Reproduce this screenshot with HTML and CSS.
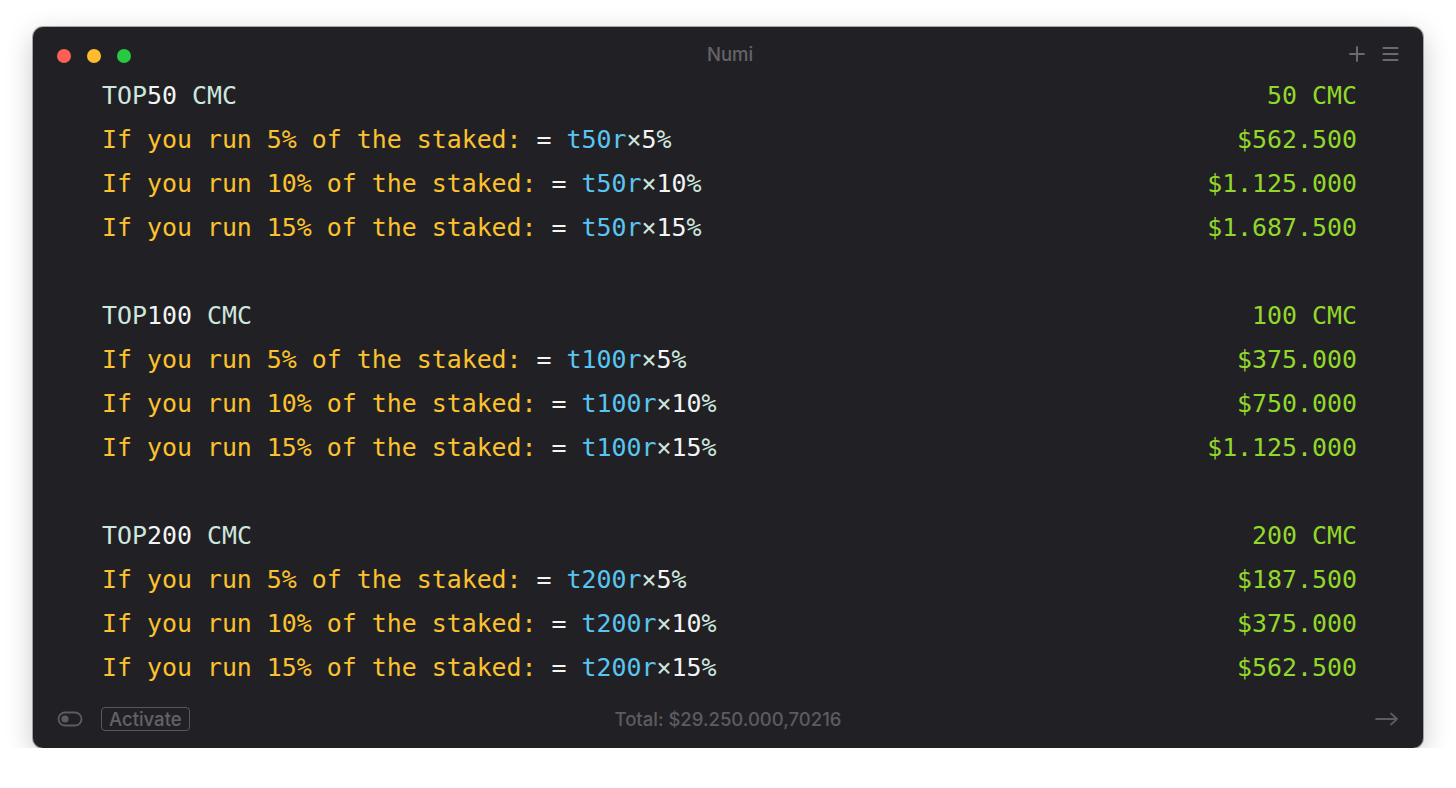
FILE: index.html
```html
<!DOCTYPE html>
<html>
<head>
<meta charset="utf-8">
<title>Numi</title>
<link rel="stylesheet" href="styles.css">
</head>
<body>
<div class="window">
  <div class="titlebar">
    <div class="lights">
      <span class="light red"></span>
      <span class="light yellow"></span>
      <span class="light green"></span>
    </div>
    <div class="title">Numi</div>
    <div class="tools">
      <svg width="16" height="16" viewBox="0 0 16 16"><path d="M8 1v14M1 8h14" stroke="#6a6a6e" stroke-width="2" stroke-linecap="round"/></svg>
      <svg width="17" height="16" viewBox="0 0 17 16"><path d="M1.5 2h14M1.5 8h14M1.5 14h14" stroke="#6a6a6e" stroke-width="2.2" stroke-linecap="round"/></svg>
    </div>
  </div>
  <div class="content">
    <div class="line"><span><span class="t">TOP</span><span class="n">50</span><span class="t"> CMC</span></span><span class="r">50 CMC</span></div>
    <div class="line"><span><span class="y">If you run 5% of the staked:</span> <span class="n">=</span> <span class="v">t50r</span><span class="t">×</span><span class="n">5</span><span class="t">%</span></span><span class="r">$562.500</span></div>
    <div class="line"><span><span class="y">If you run 10% of the staked:</span> <span class="n">=</span> <span class="v">t50r</span><span class="t">×</span><span class="n">10</span><span class="t">%</span></span><span class="r">$1.125.000</span></div>
    <div class="line"><span><span class="y">If you run 15% of the staked:</span> <span class="n">=</span> <span class="v">t50r</span><span class="t">×</span><span class="n">15</span><span class="t">%</span></span><span class="r">$1.687.500</span></div>
    <div class="line"></div>
    <div class="line"><span><span class="t">TOP</span><span class="n">100</span><span class="t"> CMC</span></span><span class="r">100 CMC</span></div>
    <div class="line"><span><span class="y">If you run 5% of the staked:</span> <span class="n">=</span> <span class="v">t100r</span><span class="t">×</span><span class="n">5</span><span class="t">%</span></span><span class="r">$375.000</span></div>
    <div class="line"><span><span class="y">If you run 10% of the staked:</span> <span class="n">=</span> <span class="v">t100r</span><span class="t">×</span><span class="n">10</span><span class="t">%</span></span><span class="r">$750.000</span></div>
    <div class="line"><span><span class="y">If you run 15% of the staked:</span> <span class="n">=</span> <span class="v">t100r</span><span class="t">×</span><span class="n">15</span><span class="t">%</span></span><span class="r">$1.125.000</span></div>
    <div class="line"></div>
    <div class="line"><span><span class="t">TOP</span><span class="n">200</span><span class="t"> CMC</span></span><span class="r">200 CMC</span></div>
    <div class="line"><span><span class="y">If you run 5% of the staked:</span> <span class="n">=</span> <span class="v">t200r</span><span class="t">×</span><span class="n">5</span><span class="t">%</span></span><span class="r">$187.500</span></div>
    <div class="line"><span><span class="y">If you run 10% of the staked:</span> <span class="n">=</span> <span class="v">t200r</span><span class="t">×</span><span class="n">10</span><span class="t">%</span></span><span class="r">$375.000</span></div>
    <div class="line"><span><span class="y">If you run 15% of the staked:</span> <span class="n">=</span> <span class="v">t200r</span><span class="t">×</span><span class="n">15</span><span class="t">%</span></span><span class="r">$562.500</span></div>
  </div>
  <div class="footer">
    <div class="left">
      <svg width="26" height="16" viewBox="0 0 26 16"><rect x="1.5" y="1.5" width="23" height="13" rx="6.5" fill="none" stroke="#5c5c60" stroke-width="1.8"/><circle cx="8" cy="8" r="3.6" fill="#5c5c60"/></svg>
      <span class="activate">Activate</span>
    </div>
    <div class="total">Total: $29.250.000,70216</div>
    <div class="right">
      <svg width="24" height="14" viewBox="0 0 24 14"><path d="M1 7h21M16 1.5l6 5.5-6 5.5" fill="none" stroke="#5c5c60" stroke-width="1.8" stroke-linecap="round" stroke-linejoin="round"/></svg>
    </div>
  </div>
</div>
</body>
</html>
```

FILE: styles.css
```css
html, body {
  margin: 0;
  padding: 0;
  background: #ffffff;
}
body {
  padding: 27px 0 0 33px;
}
.window {
  width: 1390px;
  height: 721px;
  background: #212125;
  border-radius: 10px;
  box-shadow: 0 8px 28px rgba(0,0,0,0.22), 0 0 0 1px rgba(0,0,0,0.3);
  display: flex;
  flex-direction: column;
  overflow: hidden;
}
.titlebar {
  height: 46px;
  box-sizing: border-box;
  padding: 8px 24px 0 24px;
  display: flex;
  align-items: center;
}
.lights {
  display: flex;
  gap: 16px;
  margin-top: 4px;
}
.light {
  width: 14px;
  height: 14px;
  border-radius: 50%;
  display: block;
}
.red { background: #fe5f57; }
.yellow { background: #febc2e; }
.green { background: #28c840; }
.title {
  flex: 1;
  text-align: center;
  font-family: "Inter", "Liberation Sans", sans-serif;
  font-size: 18.5px;
  font-weight: 500;
  color: #646468;
  margin-left: -20px;
}
.tools {
  display: flex;
  align-items: center;
  gap: 17px;
}
.content {
  flex: 1;
  padding: 1px 66px 0 69px;
  font-family: "DejaVu Sans Mono", monospace;
  font-size: 24.9px;
}
.line {
  height: 44px;
  line-height: 44px;
  display: flex;
  justify-content: space-between;
  white-space: pre;
}
.t { color: #cde6de; }
.n { color: #f4f4f4; }
.y { color: #fcc12e; }
.v { color: #5ac5f2; }
.r { color: #92d82b; }
.footer {
  height: 59px;
  display: flex;
  align-items: center;
  justify-content: space-between;
  padding: 0 24px;
  font-family: "Inter", "Liberation Sans", sans-serif;
  font-size: 18.5px;
  font-weight: 500;
  color: #5c5c60;
}
.left {
  display: flex;
  align-items: center;
  gap: 18px;
  width: 200px;
}
.activate {
  border: 1.5px solid #58585c;
  border-radius: 4px;
  padding: 0 7px;
  height: 22px;
  line-height: 22px;
  color: #636367;
}
.total {
  flex: 1;
  text-align: center;
}
.right {
  width: 200px;
  display: flex;
  justify-content: flex-end;
}
```
